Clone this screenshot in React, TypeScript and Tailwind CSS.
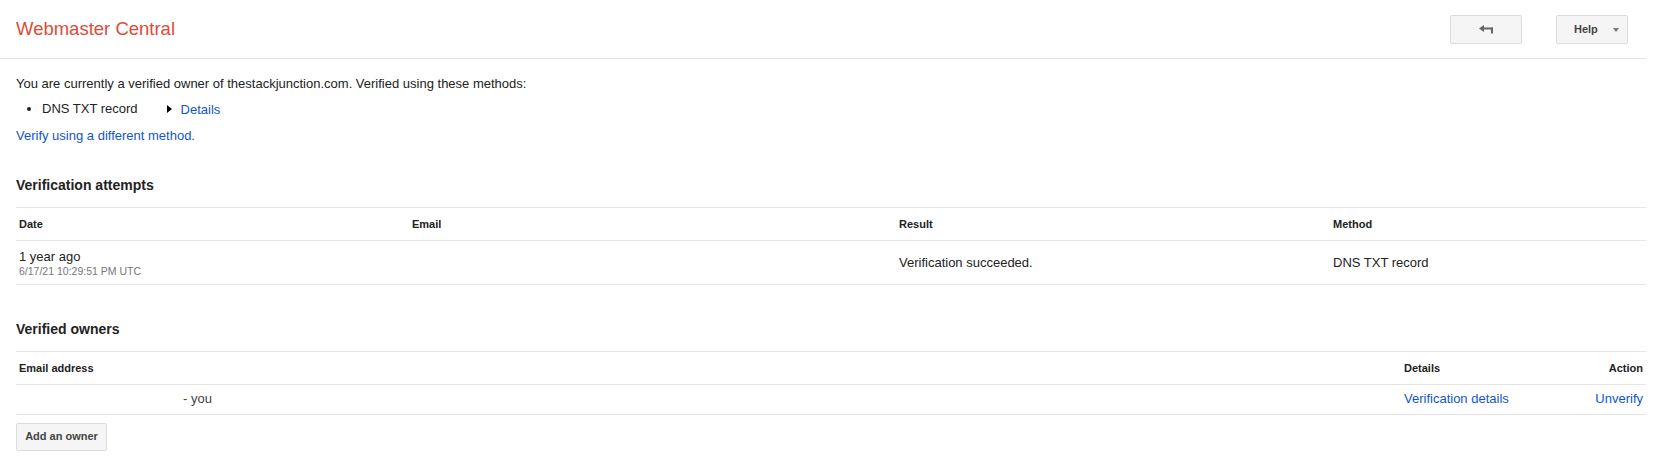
import { useState } from 'react';

const attempts = [
  { ago: '1 year ago', stamp: '6/17/21 10:29:51 PM UTC', email: '', result: 'Verification succeeded.', method: 'DNS TXT record' },
];

function BackArrow() {
  return (
    <svg width="15" height="9" viewBox="0 0 15 9" className="block">
      <polygon points="0,3.5 5,0 5,7" fill="#666" />
      <rect x="4" y="2.5" width="10" height="2" fill="#666" />
      <rect x="12" y="2.5" width="2" height="6" fill="#666" />
    </svg>
  );
}

export default function App() {
  const [open, setOpen] = useState(false);

  return (
    <div className="min-h-screen bg-white pr-[17px] text-[13px] text-[#222]" style={{ fontFamily: '"Liberation Sans", Arial, sans-serif' }}>

      {/* Top bar */}
      <div className="flex h-[59px] items-center justify-between border-b border-[#e5e5e5] pl-4 pr-[18px]">
        <h1 className="text-[18.5px] leading-none text-[#dd4b39]">Webmaster Central</h1>
        <div className="flex items-center gap-[34px] pt-[1px]">
          <button className="flex h-[29px] w-[72px] items-center justify-center rounded-[2px] border border-[#dcdcdc] bg-[#f5f5f5]">
            <BackArrow />
          </button>
          <button
            onClick={() => setOpen(!open)}
            className="flex h-[29px] w-[72px] items-center justify-between rounded-[2px] border border-[#dcdcdc] bg-[#f5f5f5] pl-[17px] pr-[8px] text-[11px] font-bold text-[#444]"
          >
            Help
            <span className="h-0 w-0 border-x-[3.5px] border-t-[4px] border-x-transparent border-t-[#777]" />
          </button>
        </div>
      </div>

      <div className="pl-4">

        {/* Ownership summary */}
        <p className="mt-[16px] leading-[17px]">
          You are currently a verified owner of thestackjunction.com. Verified using these methods:
        </p>
        <ul className="mt-[8px] list-disc pl-[26px] leading-[17px]">
          <li>
            <span>DNS TXT record</span>
            <span className="ml-[29px] inline-flex items-center gap-[9px]">
              <span className="h-0 w-0 border-y-[4px] border-l-[5px] border-y-transparent border-l-black" />
              <a className="text-[#15c]">Details</a>
            </span>
          </li>
        </ul>
        <a className="mt-[9px] block leading-[17px] text-[#15c]">Verify using a different method.</a>

        {/* Verification attempts */}
        <h2 className="mt-[32px] text-[14px] font-bold leading-[18px]">Verification attempts</h2>
        <table className="mt-[13px] w-full table-fixed border-collapse">
          <thead>
            <tr className="border-y border-[#e5e5e5] text-left text-[11px] font-bold">
              <th className="h-[33px] w-[393px] pl-[3px] pt-[2px]">Date</th>
              <th className="w-[487px] pl-[3px] pt-[2px]">Email</th>
              <th className="w-[434px] pl-[3px] pt-[2px]">Result</th>
              <th className="pl-[3px] pt-[2px]">Method</th>
            </tr>
          </thead>
          <tbody>
            {attempts.map((a, i) => (
              <tr key={i} className="border-b border-[#e5e5e5]">
                <td className="h-[44px] pl-[3px] pt-[3px]">
                  <div className="leading-[16px]">{a.ago}</div>
                  <div className="text-[10.5px] leading-[13px] text-[#777]">{a.stamp}</div>
                </td>
                <td className="pl-[3px]">{a.email}</td>
                <td className="pl-[3px] pt-[2px]">{a.result}</td>
                <td className="pl-[3px] pt-[2px]">{a.method}</td>
              </tr>
            ))}
          </tbody>
        </table>

        {/* Verified owners */}
        <h2 className="mt-[35px] text-[14px] font-bold leading-[18px]">Verified owners</h2>
        <table className="mt-[13px] w-full table-fixed border-collapse">
          <thead>
            <tr className="border-y border-[#e5e5e5] text-left text-[11px] font-bold">
              <th className="h-[33px] pl-[3px] pt-[1px]">Email address</th>
              <th className="w-[125px] pl-[3px] pt-[1px]">Details</th>
              <th className="w-[120px] pr-[3px] pt-[1px] text-right">Action</th>
            </tr>
          </thead>
          <tbody>
            <tr className="border-b border-[#e5e5e5]">
              <td className="h-[30px] pl-[167px] text-[#444]">- you</td>
              <td className="pl-[3px]"><a className="text-[#15c]">Verification details</a></td>
              <td className="pr-[3px] text-right"><a className="text-[#15c]">Unverify</a></td>
            </tr>
          </tbody>
        </table>

        <button className="mt-[8px] h-[28px] w-[91px] rounded-[2px] border border-[#dcdcdc] bg-[#f5f5f5] text-[11px] font-bold text-[#444]">
          Add an owner
        </button>
      </div>
    </div>
  );
}
